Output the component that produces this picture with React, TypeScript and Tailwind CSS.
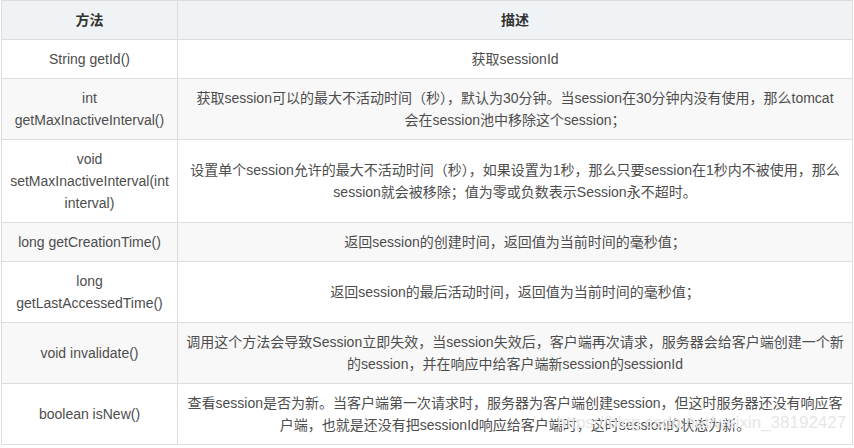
import React from "react";

const rows: [React.ReactNode, React.ReactNode][] = [
  ["String getId()", "获取sessionId"],
  [
    <>int<br />getMaxInactiveInterval()</>,
    <>获取session可以的最大不活动时间（秒），默认为30分钟。当session在30分钟内没有使用，那么tomcat<br />会在session池中移除这个session；</>,
  ],
  [
    "void setMaxInactiveInterval(int interval)",
    "设置单个session允许的最大不活动时间（秒），如果设置为1秒，那么只要session在1秒内不被使用，那么session就会被移除；值为零或负数表示Session永不超时。",
  ],
  ["long getCreationTime()", "返回session的创建时间，返回值为当前时间的毫秒值；"],
  [<>long<br />getLastAccessedTime()</>, "返回session的最后活动时间，返回值为当前时间的毫秒值；"],
  [
    "void invalidate()",
    "调用这个方法会导致Session立即失效，当session失效后，客户端再次请求，服务器会给客户端创建一个新的session，并在响应中给客户端新session的sessionId",
  ],
  [
    "boolean isNew()",
    "查看session是否为新。当客户端第一次请求时，服务器为客户端创建session，但这时服务器还没有响应客户端，也就是还没有把sessionId响应给客户端时，这时session的状态为新。",
  ],
];

export default function App() {
  return (
    <div
      className="relative w-[854px] h-[448px] bg-white overflow-hidden"
      style={{ fontFamily: '"Liberation Sans", Arial, "Noto Sans CJK SC", sans-serif' }}
    >
      <table className="ml-[1px] w-[852px] table-fixed border-collapse text-[14px] leading-[22px] text-[#4d4d4d]">
        <colgroup>
          <col className="w-[176px]" />
          <col />
        </colgroup>
        <thead>
          <tr className="bg-[#eff3f5]">
            <th className="border border-[#dddddd] px-2 py-2 text-center font-bold text-[#333]">方法</th>
            <th className="border border-[#dddddd] px-2 py-2 text-center font-bold text-[#333]">描述</th>
          </tr>
        </thead>
        <tbody>
          {rows.map(([a, b], i) => (
            <tr key={i} className={i % 2 === 1 ? "bg-[#f8f8f8]" : "bg-white"}>
              <td className="border border-[#dddddd] px-2 py-2 text-center align-middle">{a}</td>
              <td className="border border-[#dddddd] px-2 py-2 text-center align-middle">{b}</td>
            </tr>
          ))}
        </tbody>
      </table>
      <div className="absolute left-[557px] top-[413px] text-[17px] leading-[20px] text-[#e6e6e6] whitespace-nowrap pointer-events-none">
        https://blog.csdn.net/weixin_38192427
      </div>
    </div>
  );
}
